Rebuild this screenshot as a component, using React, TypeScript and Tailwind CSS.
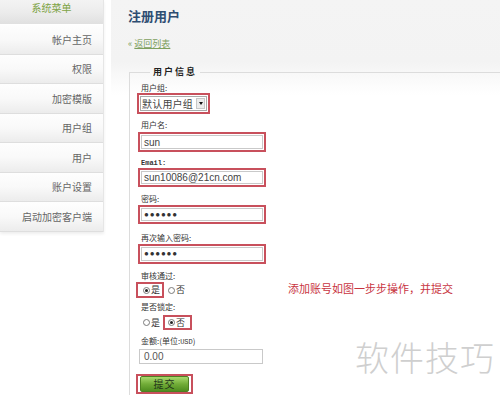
import React from "react";

const CJK = '"Noto Sans CJK SC", "Noto Sans", sans-serif';
const MONO = '"Liberation Mono", "Noto Sans CJK SC", monospace';
const ARIAL = '"Liberation Sans", "Noto Sans CJK SC", sans-serif';

function Radio({ checked }: { checked?: boolean }) {
  return (
    <span className="w-[7px] h-[7px] rounded-full border border-[#7a7a7a] bg-white flex items-center justify-center shrink-0">
      {checked ? <span className="w-[3px] h-[3px] rounded-full bg-[#222]" /> : null}
    </span>
  );
}

function Label({ children, mt }: { children: React.ReactNode; mt: string }) {
  return (
    <div className={`${mt} h-[10px] leading-[10px] text-[8px] text-[#333] pl-[3px] whitespace-nowrap`}>{children}</div>
  );
}

function RedInput({ mt, h, children }: { mt: string; h: string; children: React.ReactNode }) {
  return (
    <div className={`${mt} ${h} w-[128px] border-2 border-[#c8505c] p-[1px] flex`}>
      <div className="flex-1 border border-[#c9c9c9] bg-white flex items-center pl-[2px] text-[10px] text-[#444]" style={{ fontFamily: ARIAL }}>
        {children}
      </div>
    </div>
  );
}

export default function App() {
  const menu = ["帐户主页", "权限", "加密模版", "用户组", "用户", "账户设置", "启动加密客户端"];
  return (
    <div className="relative w-[500px] h-[395px] overflow-hidden bg-white flex" style={{ fontFamily: CJK }}>
      {/* Sidebar */}
      <div className="w-[104px] shrink-0 self-start flex flex-col border-r border-[#e6e6e6] shadow-[0_2px_3px_rgba(0,0,0,0.07)]">
        <div className="h-[25px] pt-[3px] text-center text-[10px] leading-[10px] text-[#7da344] bg-gradient-to-b from-[#f3f3f3] via-[#ececec] to-[#e0e0e0] border-b border-white">
          系统菜单
        </div>
        {menu.map((m) => (
          <div
            key={m}
            className="h-[29.5px] flex items-center justify-end pr-[11px] text-[10px] text-[#666] bg-gradient-to-b from-[#fefefe] via-[#f9f9f9] to-[#ececec] border-b border-[#dedede]"
          >
            {m}
          </div>
        ))}
      </div>

      <div className="w-[7px] shrink-0" />

      {/* Main */}
      <div className="flex-1 min-w-0 pl-[17px] bg-[linear-gradient(to_bottom,#f4f4f4_0px,#f3f3f3_62px,#f8f8f8_74px,#ffffff_95px)]">
        <div className="pt-[8px] text-[13px] leading-[16px] font-bold text-[#2e4d72]">注册用户</div>
        <div className="mt-[14px] text-[9px] leading-[12px] text-[#7ea05e] whitespace-nowrap">
          «&nbsp;<span className="underline">返回列表</span>
        </div>

        <fieldset className="mt-[16px] ml-[1px] w-[420px] h-[400px] border border-[#dcdcdc] pl-[8px]">
          <legend className="ml-[12px] px-[3px] text-[9px] leading-[12px] font-bold tracking-[2px] text-[#222]">用户信息</legend>

          <Label mt="mt-[5px]">用户组:</Label>
          <div className="mt-0 ml-[-1px] h-[21px] w-[73px] border-2 border-[#c8505c] p-[1px] flex">
            <div className="flex-1 border border-[#a9a9a9] bg-white flex items-center">
              <span className="pl-[1px] text-[10px] leading-[12px] tracking-[0.2px] text-[#444] whitespace-nowrap">默认用户组</span>
              <span className="ml-auto mr-[1px] w-[9px] h-[11px] bg-[#ececec] border border-[#c8c8c8] flex items-center justify-center shrink-0">
                <span className="w-0 h-0 border-l-[2.5px] border-r-[2.5px] border-t-[3px] border-l-transparent border-r-transparent border-t-[#111]" />
              </span>
            </div>
          </div>

          <Label mt="mt-[6px]">用户名:</Label>
          <RedInput mt="mt-[2px]" h="h-[20px]">sun</RedInput>

          <Label mt="mt-[5px]">
            <span style={{ fontFamily: MONO }} className="text-[7px] font-bold">Email:</span>
          </Label>
          <RedInput mt="mt-[1px]" h="h-[19px]">sun10086@21cn.com</RedInput>

          <Label mt="mt-[7px]">密码:</Label>
          <RedInput mt="mt-[1px]" h="h-[19px]">
            <span className="text-[8px] tracking-[0.8px] text-[#333]">●●●●●●</span>
          </RedInput>

          <Label mt="mt-[9px]">再次输入密码:</Label>
          <RedInput mt="mt-[1px]" h="h-[20px]">
            <span className="text-[8px] tracking-[0.8px] text-[#333]">●●●●●●</span>
          </RedInput>

          <Label mt="mt-[7px]">审核通过:</Label>
          <div className="mt-[1px] h-[16px] flex items-center text-[9px] text-[#333]">
            <div className="ml-[-2px] h-[16px] border-2 border-[#c8505c] pl-[5px] pr-[2px] flex items-center">
              <Radio checked />
              <span className="ml-[1px] leading-[10px]">是</span>
            </div>
            <div className="ml-[4px] flex items-center">
              <Radio />
              <span className="ml-[1px] leading-[10px]">否</span>
            </div>
          </div>

          <Label mt="mt-[4px]">是否锁定:</Label>
          <div className="mt-[3px] h-[15px] flex items-center text-[9px] text-[#333]">
            <div className="ml-[5px] flex items-center">
              <Radio />
              <span className="ml-[1px] leading-[10px]">是</span>
            </div>
            <div className="ml-[3px] h-[15px] border-2 border-[#c8505c] pl-[3px] pr-[5px] flex items-center">
              <Radio checked />
              <span className="ml-[1px] leading-[10px]">否</span>
            </div>
          </div>

          <Label mt="mt-[6px]">
            金额:(单位:<span style={{ fontFamily: MONO }} className="text-[7px]">USD</span>)
          </Label>
          <div className="mt-[3px] ml-[1px] h-[15px] w-[124px] border border-[#c9c9c9] bg-white flex items-center pl-[4px] text-[10px] text-[#555]" style={{ fontFamily: ARIAL }}>
            0.00
          </div>

          <div className="mt-[10px] ml-[-2px] h-[20px] w-[57px] border-2 border-[#c8505c] px-[2px] flex">
            <div className="flex-1 h-[16px] rounded-[2px] border border-[#4d7f22] bg-gradient-to-b from-[#a8d86c] via-[#72ad38] to-[#4f8d1f] flex items-center justify-center text-[10px] leading-[12px] text-[#23361a] tracking-[1px]">
              提交
            </div>
          </div>
        </fieldset>
      </div>

      {/* annotation overlays */}
      <div className="absolute left-[288px] top-[282px] text-[11px] leading-[12px] text-[#c8343f] whitespace-nowrap">
        添加账号如图一步步操作，并提交
      </div>
      <div className="absolute left-[355px] top-[337px] text-[34px] leading-[40px] tracking-[1px] text-[#cfcfcf] font-light whitespace-nowrap">
        软件技巧
      </div>
    </div>
  );
}
